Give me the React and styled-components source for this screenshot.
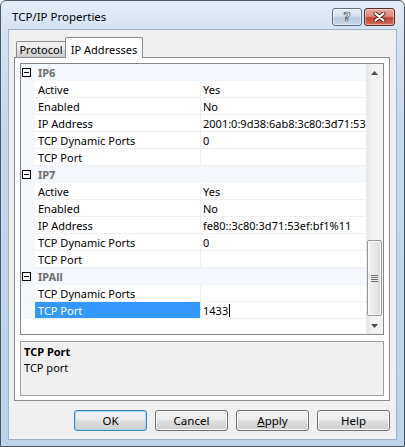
import React from "react";
import styled, { createGlobalStyle } from "styled-components";

const GlobalStyle = createGlobalStyle`
  html, body {
    margin: 0;
    padding: 0;
    background: #ffffff;
  }
  body {
    font-family: "Segoe UI", "Noto Sans", sans-serif;
    font-size: 11px;
    color: #000;
  }
`;

const groups = [
  {
    name: "IP6",
    props: [
      { name: "Active", value: "Yes" },
      { name: "Enabled", value: "No" },
      { name: "IP Address", value: "2001:0:9d38:6ab8:3c80:3d71:53ef:bf1" },
      { name: "TCP Dynamic Ports", value: "0" },
      { name: "TCP Port", value: "" },
    ],
  },
  {
    name: "IP7",
    props: [
      { name: "Active", value: "Yes" },
      { name: "Enabled", value: "No" },
      { name: "IP Address", value: "fe80::3c80:3d71:53ef:bf1%11" },
      { name: "TCP Dynamic Ports", value: "0" },
      { name: "TCP Port", value: "" },
    ],
  },
  {
    name: "IPAll",
    props: [
      { name: "TCP Dynamic Ports", value: "" },
      { name: "TCP Port", value: "1433", selected: true },
    ],
  },
];

export default function App() {
  return (
    <>
      <GlobalStyle />
      <Window>
        <TitleBar>
          <Title>TCP/IP Properties</Title>
          <CaptionButtons>
            <CaptionButton>
              <HelpGlyph>?</HelpGlyph>
            </CaptionButton>
            <CaptionButton $close>
              <svg width="13" height="10" viewBox="0 0 13 10">
                <path
                  d="M2.5 1.5 L10.5 8.5 M10.5 1.5 L2.5 8.5"
                  stroke="#4b1c16"
                  strokeWidth="4"
                  strokeLinecap="round"
                />
                <path
                  d="M2.5 1.5 L10.5 8.5 M10.5 1.5 L2.5 8.5"
                  stroke="#ffffff"
                  strokeWidth="2.3"
                  strokeLinecap="round"
                />
              </svg>
            </CaptionButton>
          </CaptionButtons>
        </TitleBar>

        <Client>
          <TabStrip>
            <Tab>Protocol</Tab>
            <Tab $active>IP Addresses</Tab>
          </TabStrip>

          <TabPanel>
            <Grid>
              <Rows>
                {groups.map((group) => (
                  <React.Fragment key={group.name}>
                    <CategoryRow>
                      <Expander>
                        <svg width="9" height="9" viewBox="0 0 9 9">
                          <rect
                            x="0.5"
                            y="0.5"
                            width="8"
                            height="8"
                            fill="#fff"
                            stroke="#000"
                          />
                          <path d="M2 4.5 H7" stroke="#000" />
                        </svg>
                      </Expander>
                      <CategoryName>{group.name}</CategoryName>
                    </CategoryRow>
                    {group.props.map((prop) => (
                      <PropRow key={group.name + prop.name}>
                        <Gutter />
                        <PropName $selected={prop.selected}>{prop.name}</PropName>
                        <PropValue>
                          {prop.value}
                          {prop.selected && <Caret />}
                        </PropValue>
                      </PropRow>
                    ))}
                  </React.Fragment>
                ))}
                <Filler />
              </Rows>

              <ScrollBar>
                <ScrollArrow>
                  <svg width="7" height="4" viewBox="0 0 7 4">
                    <polygon points="3.5,0 7,4 0,4" fill="#4d4d4d" />
                  </svg>
                </ScrollArrow>
                <Track>
                  <Thumb>
                    <Grip />
                  </Thumb>
                </Track>
                <ScrollArrow>
                  <svg width="7" height="4" viewBox="0 0 7 4">
                    <polygon points="0,0 7,0 3.5,4" fill="#4d4d4d" />
                  </svg>
                </ScrollArrow>
              </ScrollBar>
            </Grid>

            <Description>
              <DescTitle>TCP Port</DescTitle>
              <DescText>TCP port</DescText>
            </Description>
          </TabPanel>

          <ButtonRow>
            <Button $default>OK</Button>
            <Button>Cancel</Button>
            <Button>
              <u>A</u>pply
            </Button>
            <Button>Help</Button>
          </ButtonRow>
        </Client>
      </Window>
    </>
  );
}

const Window = styled.div`
  box-sizing: border-box;
  width: 405px;
  height: 447px;
  display: flex;
  flex-direction: column;
  border: 1px solid #4f5862;
  border-radius: 6px 6px 0 0;
  background: linear-gradient(
    180deg,
    #e4edf7 0px,
    #d5e3f2 28px,
    #c5d8ed 120px,
    #bcd3ec 100%
  );
  padding: 0 7px 6px 7px;
`;

const TitleBar = styled.div`
  height: 28px;
  flex-shrink: 0;
  display: flex;
  align-items: center;
  justify-content: space-between;
  padding: 3px 2px 0 4px;
  box-sizing: border-box;
`;

const Title = styled.span`
  font-size: 11.5px;
  color: #000;
  padding-bottom: 1px;
`;

const CaptionButtons = styled.div`
  display: flex;
  gap: 2px;
`;

const CaptionButton = styled.div`
  box-sizing: border-box;
  width: ${(p) => (p.$close ? "31px" : "30px")};
  height: 18px;
  display: flex;
  align-items: center;
  justify-content: center;
  border: 1px solid ${(p) => (p.$close ? "#5a2a24" : "#5d6f84")};
  border-radius: 3px;
  background: ${(p) =>
    p.$close
      ? "linear-gradient(180deg, #e9a99b 0%, #dc8a79 45%, #c7452f 55%, #d3705b 100%)"
      : "linear-gradient(180deg, #e6eef7 0%, #d3e0ee 45%, #b7cbe0 55%, #c9d9ea 100%)"};
  box-shadow: inset 0 0 0 1px rgba(255, 255, 255, 0.45);
`;

const HelpGlyph = styled.span`
  font-family: "DejaVu Sans", sans-serif;
  font-weight: bold;
  font-size: 13px;
  line-height: 13px;
  color: #ffffff;
  -webkit-text-stroke: 0.7px #3c4e63;
`;

const Client = styled.div`
  flex: 1;
  display: flex;
  flex-direction: column;
  background: #f0f0f0;
  border: 1px solid #9fb2c8;
  padding: 7px 6px 0 5px;
`;

const TabStrip = styled.div`
  height: 20px;
  display: flex;
  align-items: flex-end;
  padding-left: 2px;
  position: relative;
  z-index: 1;
`;

const Tab = styled.div`
  box-sizing: border-box;
  height: ${(p) => (p.$active ? "21px" : "16px")};
  width: ${(p) => (p.$active ? "78px" : "50px")};
  margin-bottom: ${(p) => (p.$active ? "-1px" : "0")};
  margin-left: ${(p) => (p.$active ? "-1px" : "0")};
  padding: ${(p) => (p.$active ? "2px 0 0 0" : "0")};
  border: 1px solid #898c95;
  border-bottom: none;
  border-radius: 2px 2px 0 0;
  background: ${(p) =>
    p.$active
      ? "#ffffff"
      : "linear-gradient(180deg, #f2f2f2 0%, #ebebeb 45%, #dddddd 55%, #cfcfcf 100%)"};
  display: flex;
  align-items: center;
  justify-content: center;
  white-space: nowrap;
  font-size: 11px;
`;

const TabPanel = styled.div`
  box-sizing: border-box;
  height: 344px;
  border: 1px solid #898c95;
  background: #ffffff;
  padding: 5px 5px 4px 5px;
  display: flex;
  flex-direction: column;
  gap: 6px;
`;

const Grid = styled.div`
  box-sizing: border-box;
  height: 272px;
  border: 1px solid #828790;
  display: flex;
  background: #ffffff;
`;

const Rows = styled.div`
  flex: 1;
  display: flex;
  flex-direction: column;
  min-width: 0;
`;

const CategoryRow = styled.div`
  height: 17px;
  flex-shrink: 0;
  display: flex;
  align-items: center;
  background: #f4f7fb;
`;

const Expander = styled.div`
  width: 9px;
  height: 9px;
  margin-left: 1px;
  display: flex;
`;

const CategoryName = styled.span`
  margin-left: 7px;
  font-weight: bold;
  color: #6d6d6d;
`;

const PropRow = styled.div`
  height: 17px;
  flex-shrink: 0;
  display: grid;
  grid-template-columns: 14px 166px 1fr;
`;

const Gutter = styled.div`
  background: #f4f7fb;
`;

const PropName = styled.div`
  box-sizing: border-box;
  padding-left: 3px;
  border-right: 1px solid #f0f0f0;
  border-bottom: 1px solid #f0f0f0;
  display: flex;
  align-items: center;
  white-space: nowrap;
  overflow: hidden;
  background: ${(p) => (p.$selected ? "#3399ff" : "#ffffff")};
  color: ${(p) => (p.$selected ? "#ffffff" : "#000000")};
`;

const PropValue = styled.div`
  box-sizing: border-box;
  padding-left: 2px;
  border-bottom: 1px solid #f0f0f0;
  display: flex;
  align-items: center;
  white-space: nowrap;
  overflow: hidden;
`;

const Caret = styled.span`
  width: 1px;
  height: 13px;
  background: #000;
  margin-left: 1px;
`;

const Filler = styled.div`
  flex: 1;
`;

const ScrollBar = styled.div`
  width: 17px;
  flex-shrink: 0;
  display: flex;
  flex-direction: column;
  background: linear-gradient(90deg, #e6e6e6 0%, #f2f2f2 40%, #f2f2f2 100%);
`;

const ScrollArrow = styled.div`
  height: 17px;
  flex-shrink: 0;
  display: flex;
  align-items: center;
  justify-content: center;
`;

const Track = styled.div`
  flex: 1;
  display: flex;
  flex-direction: column;
  justify-content: flex-end;
  padding: 0 1px 1px 1px;
`;

const Thumb = styled.div`
  box-sizing: border-box;
  height: 76px;
  border: 1px solid #979797;
  border-radius: 2px;
  background: linear-gradient(90deg, #f3f3f3 0%, #e9e9e9 50%, #d9d9d9 100%);
  box-shadow: inset 0 0 0 1px #fbfbfb;
  display: flex;
  align-items: center;
  justify-content: center;
`;

const Grip = styled.div`
  width: 7px;
  height: 7px;
  background: repeating-linear-gradient(
    180deg,
    #6e6e6e 0px,
    #6e6e6e 1px,
    #ececec 1px,
    #ececec 2px
  );
`;

const Description = styled.div`
  box-sizing: border-box;
  flex: 1;
  border: 1px solid #a0a0a0;
  background: #f0f0f0;
  padding: 2px 3px;
  display: flex;
  flex-direction: column;
`;

const DescTitle = styled.div`
  font-weight: bold;
  line-height: 16px;
`;

const DescText = styled.div`
  line-height: 16px;
`;

const ButtonRow = styled.div`
  display: flex;
  justify-content: flex-end;
  gap: 8px;
  margin-top: 9px;
`;

const Button = styled.div`
  box-sizing: border-box;
  width: 73px;
  height: 21px;
  display: flex;
  align-items: center;
  justify-content: center;
  border: 1px solid ${(p) => (p.$default ? "#3c7fb1" : "#707070")};
  border-radius: 3px;
  background: linear-gradient(
    180deg,
    #f2f2f2 0%,
    #ebebeb 45%,
    #dddddd 55%,
    #cfcfcf 100%
  );
  box-shadow: inset 0 0 0 1px ${(p) => (p.$default ? "#a6dcf6" : "#fbfbfb")};
  font-size: 11.5px;

  u {
    text-decoration: underline;
  }
`;
